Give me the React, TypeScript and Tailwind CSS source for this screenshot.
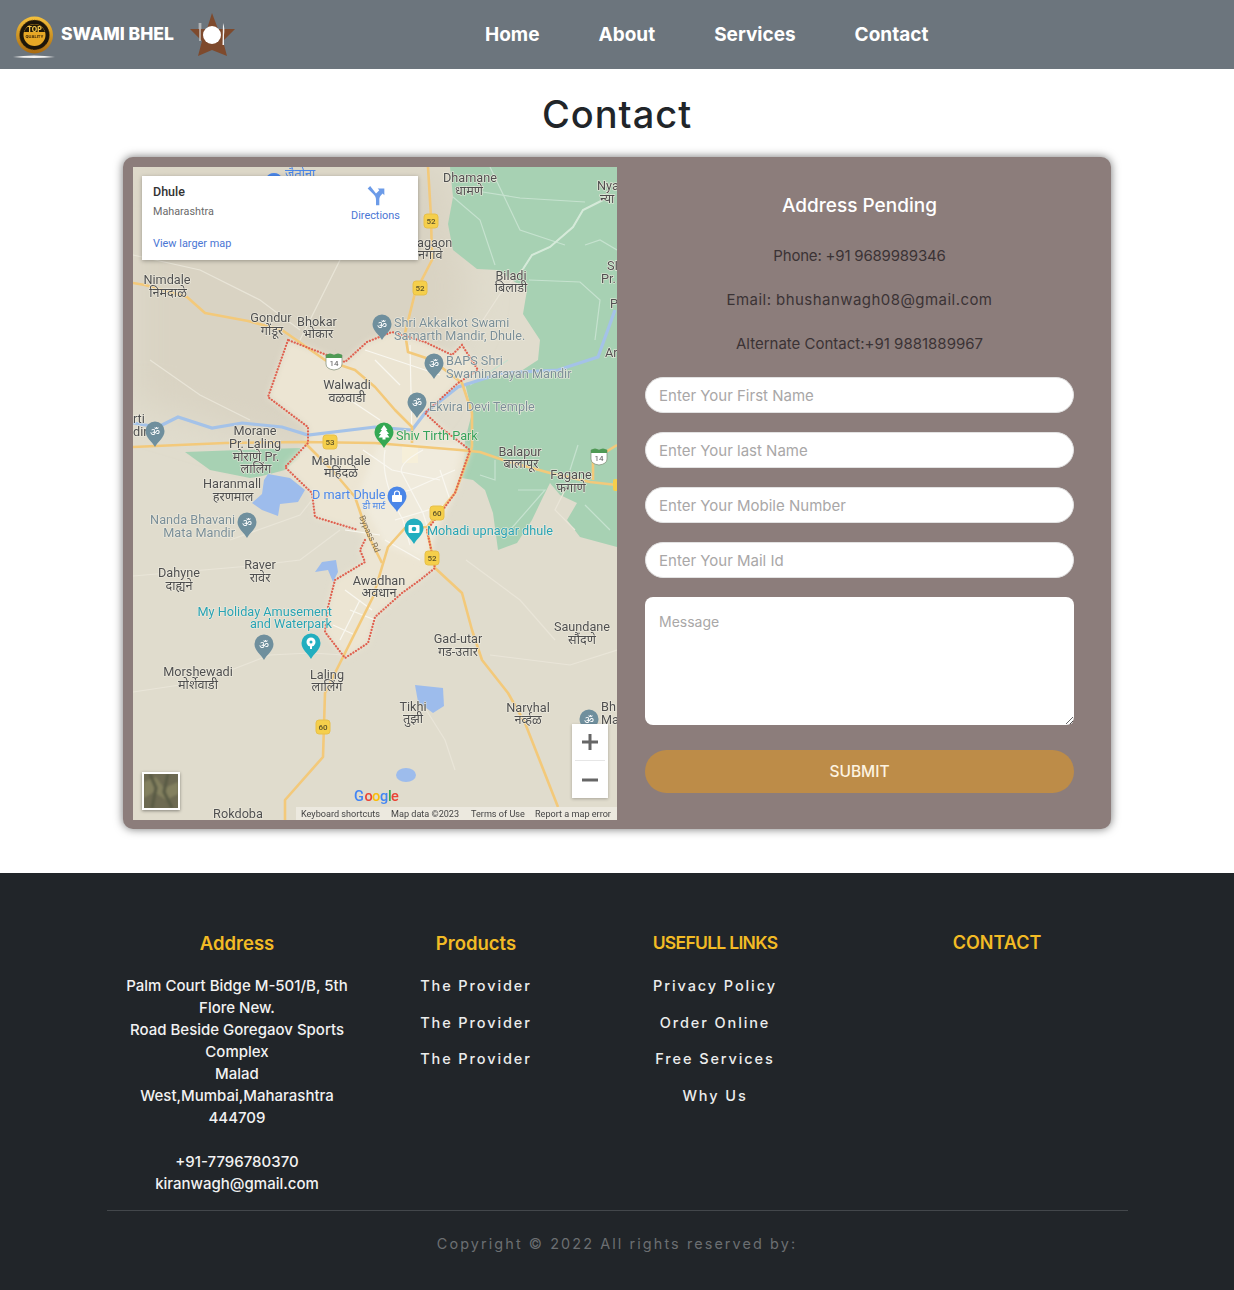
import React from "react";

const FONT = "font-['Inter','Liberation_Sans',sans-serif]";

type Label = [number, number, string];

// dark place names, centred; x and y are page pixels because the svg viewBox starts at the map's page offset
const places: Label[] = [
  [470, 182, "Dhamane"], [469, 195, "धामणे"], [511, 280, "Biladi"], [511, 292, "बिलाडी"],
  [167, 284, "Nimdale"], [168, 297, "निमदाळे"], [271, 322, "Gondur"], [272, 335, "गोंडूर"],
  [317, 326, "Bhokar"], [318, 338, "भोकार"], [347, 389, "Walwadi"], [347, 402, "वळवाडी"],
  [255, 435, "Morane"], [255, 448, "Pr. Laling"], [256, 461, "मोराणे Pr."], [256, 473, "लालिंग"],
  [520, 456, "Balapur"], [521, 468, "बालापूर"], [571, 479, "Fagane"], [571, 492, "फगाणे"],
  [341, 465, "Mahindale"], [341, 477, "महिंदळे"], [232, 488, "Haranmall"], [233, 501, "हरणमाल"],
  [179, 577, "Dahyne"], [179, 590, "दाह्यने"], [260, 569, "Raver"], [260, 582, "रावेर"],
  [379, 585, "Awadhan"], [379, 597, "अवधान"], [198, 676, "Morshewadi"], [198, 689, "मोर्शेवाडी"],
  [327, 679, "Laling"], [327, 691, "लालिंग"], [458, 643, "Gad-utar"], [458, 656, "गड-उतार"],
  [582, 631, "Saundane"], [582, 644, "सौंदणे"], [413, 711, "Tikhi"], [413, 723, "तुझी"],
  [528, 712, "Narvhal"], [528, 724, "नर्व्हळ"], [238, 818, "Rokdoba"],
];

// labels cut by the map's edge, left aligned
const leftPlaces: Label[] = [
  [417, 247, "agaon"], [418, 259, "नगावे"], [597, 190, "Nya"], [600, 203, "न्या"],
  [607, 270, "SI"], [601, 283, "Pr."], [610, 308, "P"], [605, 357, "Ar"],
  [133, 423, "rti"], [133, 436, "dir"], [601, 711, "Bh"], [601, 724, "Ma"],
];

const yellowRoads = [
  "M428 167L431 217L432 260L415 293L405 333L408 352L432 360L462 383L472 413L472 447",
  "M133 283L145 285L187 297L205 313L248 321L282 330L325 360L355 370L375 387L395 410L412 427L412 443",
  "M133 447L225 443L302 442L375 443L460 450L480 452L503 460L550 473L590 482L617 485",
  "M593 480L593 460L617 445",
  "M305 443L332 470L355 497L368 535L382 563",
  "M472 447L455 493L427 527L405 528L388 547L373 597L345 653L325 693L323 757L285 800L285 820",
  "M427 530L435 568L462 593L472 630L482 660L508 693L525 723L558 807",
];

const paleRoads = [
  "M133 576L180 572L250 566L300 560L340 530",
  "M133 692L200 682L270 655L310 653L345 655",
  "M133 255L200 270L260 300L300 330",
  "M230 540L300 515L320 490",
  "M490 655L570 665L617 650",
  "M420 700L445 740L455 770",
  "M340 260L320 300L300 340",
  "M150 360L200 395L250 420",
  "M466 560L520 600L555 640",
  "M523 269L500 294L483 320",
  "M565 490L555 510L575 530",
];

// thin tracks that run through the forest
const forestRoads = [
  "M603 200L583 210L573 227L550 247L532 255L523 269",
  "M490 167L520 230L565 245",
  "M453 197L480 220L495 265",
  "M470 190L520 198L585 202",
  "M529 280L580 282L600 300L595 340",
  "M617 250L600 240L585 245",
  "M508 360L470 385",
  "M518 490L545 490L510 530",
  "M585 505L610 530",
  "M480 475L495 480L495 460",
  "M578 445L570 470",
];

const cityStreets = [
  "M385 450Q380 480 403 520L410 545", "M423 450Q395 465 403 475L423 513L430 535",
  "M363 450L392 470L440 480", "M375 500L410 490L455 470", "M395 520L445 505",
  "M410 345L412 440", "M365 350L440 375", "M385 540L420 560", "M440 470L450 500",
  "M350 610L375 620", "M340 640L360 600", "M345 590L372 610", "M333 625L355 635",
  "M350 400L380 420", "M375 360L400 385", "M345 530L380 535",
];

const Shield = ({ x, y, n }: { x: number; y: number; n: string }) => (
  <g>
    <rect x={x - 7} y={y - 7} width="14" height="14" rx="3" fill="#f5cf4b" stroke="#e8c04a" />
    <text x={x} y={y + 3} textAnchor="middle" fontSize="8" fontWeight="500" fill="#5d5328">{n}</text>
  </g>
);

const WhiteShield = ({ x, y }: { x: number; y: number }) => (
  <g>
    <path d={`M${x - 8} ${y - 6}h16v9q0 5-8 6q-8-1-8-6z`} fill="#fff" stroke="#7d8a72" strokeWidth="0.7" />
    <path d={`M${x - 8} ${y - 6}q4-3 8 0q4-3 8 0v3h-16z`} fill="#4f9a55" />
    <text x={x} y={y + 5} textAnchor="middle" fontSize="8" fill="#555">14</text>
  </g>
);

const PinShape = ({ x, y, color, children }: { x: number; y: number; color: string; children?: React.ReactNode }) => (
  <g>
    <path d={`M${x} ${y + 15}C${x - 3} ${y + 9} ${x - 9.5} ${y + 6} ${x - 9.5} ${y - 1}a9.5 9.5 0 0 1 19 0C${x + 9.5} ${y + 6} ${x + 3} ${y + 9} ${x} ${y + 15}z`} fill={color} />
    {children}
  </g>
);

const OmPin = ({ x, y }: { x: number; y: number }) => (
  <PinShape x={x} y={y} color="#6f8f9d">
    <text x={x} y={y + 3.5} textAnchor="middle" fontSize="11" fill="#fff">ॐ</text>
  </PinShape>
);

const MapArt = () => (
  <svg viewBox="133 167 484 653" className="block w-full h-full font-['Roboto','Noto_Sans',sans-serif] blur-[0.35px]">
    <defs>
      <filter id="soft" x="-20%" y="-20%" width="140%" height="140%"><feGaussianBlur stdDeviation="3" /></filter>
      <filter id="softer" x="-20%" y="-20%" width="140%" height="140%"><feGaussianBlur stdDeviation="18" /></filter>
    </defs>
    <rect x="133" y="167" width="484" height="653" fill="#e0dccd" />
    <path d="M133 167H448L470 300L420 400L300 450L133 400Z" fill="#d9d3c3" filter="url(#softer)" />
    {/* forest */}
    <path d="M450 167L453 197L448 224L453 250L477 269L497 270L527 290L523 314L540 340L538 360L518 373L465 383L472 413L465 440L462 478L473 480L485 490L493 513L498 550L517 543L532 520L543 497L550 483L560 495L577 503L567 520L580 537L617 547V167Z" fill="#a7d1b3" />
    <path d="M185 452L240 450L300 448L300 458L285 470L262 476L250 478L210 470Z" fill="#a7d1b3" />
    {/* town limits fill */}
    <path d="M288 340L268 397L308 427L308 443L285 467L312 493L315 517L358 530L365 540L360 550L365 562L335 580L328 607L325 632L345 658L368 643L375 617L402 593L420 580L435 568L427 530L445 507L455 493L470 450L440 427L425 413L458 383L478 370L462 345L452 355L425 342L392 332L367 342L345 362Z" fill="#ece5d3" filter="url(#soft)" />
    <path d="M378 445H462L450 500L425 560L385 545L358 495Z" fill="#f0ebdd" filter="url(#soft)" />
    <rect x="402" y="445" width="16" height="18" fill="#f6efd9" />
    {paleRoads.map((d) => <path key={d} d={d} fill="none" stroke="#e9e5d8" strokeWidth="1.2" />)}
    {forestRoads.map((d) => <path key={d} d={d} fill="none" stroke="#c6e2cf" strokeWidth="1.2" />)}
    <path d={forestRoads[0]} fill="none" stroke="#d5ead9" strokeWidth="2" />
    {cityStreets.map((d) => <path key={d} d={d} fill="none" stroke="#f9f7f0" strokeWidth="1.2" />)}
    {/* river and lakes */}
    <path d="M133 423L158 427L178 417L212 428L242 423L282 427L308 435L375 427L412 430L425 413L458 387L502 373L558 370L598 357L615 310" fill="none" stroke="#a4c2e8" strokeWidth="3.2" />
    <path d="M268 474L290 478L305 490L298 502L280 504L278 516L262 510L252 503L262 494L264 480Z" fill="#9dbcec" />
    <path d="M315 572L322 562L336 560L338 572L333 582L328 570Z" fill="#9dbcec" />
    <path d="M415 685L443 688L444 706L433 713L418 702Z" fill="#9dbcec" />
    <ellipse cx="406" cy="775" rx="10" ry="7" fill="#9dbcec" />
    {yellowRoads.map((d) => <path key={d} d={d} fill="none" stroke="#f3c97a" strokeWidth="2.6" strokeLinejoin="round" />)}
    <rect x="613" y="479" width="6" height="12" rx="2" fill="#f5cf4b" />
    <path d="M288 340L268 397L308 427L308 443L285 467L312 493L315 517L358 530M365 540L360 550L365 562L335 580L328 607L325 632L345 658L368 643L375 617L402 593L420 580L435 568L427 530L445 507L455 493L470 450L440 427L425 413L458 383L478 370L462 345L452 355L425 342L392 332L367 342L345 362L288 340" fill="none" stroke="#e0604f" strokeWidth="2.2" strokeLinecap="round" strokeDasharray="0.1 3" />

    {places.map(([x, y, t]) => (
      <text key={t + y} x={x} y={y} textAnchor="middle" fontSize="12.7" fill="#4f4f4f" stroke="#efece0" strokeWidth="1.2" paintOrder="stroke">{t}</text>
    ))}
    {leftPlaces.map(([x, y, t]) => (
      <text key={t + y} x={x} y={y} fontSize="12.7" fill="#4f4f4f" stroke="#efece0" strokeWidth="1.2" paintOrder="stroke">{t}</text>
    ))}
    <g fontSize="12.7" fill="#7b8f98" stroke="#efece0" strokeWidth="1.2" paintOrder="stroke">
      <text x="394" y="327">Shri Akkalkot Swami</text>
      <text x="394" y="340">Samarth Mandir, Dhule.</text>
      <text x="446" y="365">BAPS Shri</text>
      <text x="446" y="378">Swaminarayan Mandir</text>
      <text x="429" y="411">Ekvira Devi Temple</text>
      <text x="235" y="524" textAnchor="end">Nanda Bhavani</text>
      <text x="235" y="537" textAnchor="end">Mata Mandir</text>
    </g>
    <g fontSize="12.7" stroke="#efece0" strokeWidth="1.2" paintOrder="stroke">
      <text x="396" y="440" fill="#35a35a">Shiv Tirth Park</text>
      <text x="312" y="499" fill="#4a86e8">D mart Dhule</text>
      <text x="374" y="509" textAnchor="middle" fontSize="9.5" fill="#4a86e8">डी मार्ट</text>
      <text x="427" y="535" fill="#29a3b3">Mohadi upnagar dhule</text>
      <text x="332" y="616" textAnchor="end" fill="#29a3b3">My Holiday Amusement</text>
      <text x="332" y="628" textAnchor="end" fill="#29a3b3">and Waterpark</text>
    </g>
    <text x="0" y="0" fontSize="8.5" fill="#7d6f58" transform="translate(359 517) rotate(66)">Bypass Rd</text>

    <Shield x={431} y={221} n="52" />
    <Shield x={420} y={288} n="52" />
    <Shield x={330} y={442} n="53" />
    <Shield x={437} y={513} n="60" />
    <Shield x={432} y={558} n="52" />
    <Shield x={323} y={727} n="60" />
    <WhiteShield x={334} y={361} />
    <WhiteShield x={599} y={456} />

    <OmPin x={382} y={325} />
    <OmPin x={434} y={364} />
    <OmPin x={417} y={403} />
    <OmPin x={155} y={432} />
    <OmPin x={247} y={523} />
    <OmPin x={264} y={645} />
    <OmPin x={589} y={720} />
    <PinShape x={384} y={433} color="#34a853">
      <path d="M384 425l3.5 5h-1.5l3 4h-2l2.5 3.5h-4v2h-3v-2h-4l2.5-3.500h-2l3-4h-1.500z" fill="#fff" />
    </PinShape>
    <PinShape x={397} y={497} color="#4a86e8">
      <rect x="392" y="495" width="10" height="7" rx="1" fill="#fff" />
      <path d="M394.5 495v-1.5a2.5 2.5 0 0 1 5 0V495" fill="none" stroke="#fff" strokeWidth="1.2" />
    </PinShape>
    <PinShape x={414} y={529} color="#22aebf">
      <rect x="408.5" y="525" width="11" height="8" rx="1" fill="#fff" />
      <circle cx="414" cy="529" r="2.3" fill="#22aebf" />
    </PinShape>
    <PinShape x={311} y={644} color="#22aebf">
      <circle cx="311" cy="642" r="4.5" fill="#fff" />
      <path d="M310 645h2v4h-2z" fill="#fff" />
      <circle cx="311" cy="642" r="1.5" fill="#22aebf" />
    </PinShape>
    <path d="M266 178a9 9 0 0 1 16 0z" fill="#4a86e8" />
    <text x="285" y="178" fontSize="12.7" fill="#4a86e8">जैतोना</text>

    <g fontSize="14.5" fontWeight="500">
      <text x="354" y="801" fill="#4285f4">G</text>
      <text x="364.5" y="801" fill="#ea4335">o</text>
      <text x="372" y="801" fill="#fbbc05">o</text>
      <text x="380" y="801" fill="#4285f4">g</text>
      <text x="388" y="801" fill="#34a853">l</text>
      <text x="391" y="801" fill="#ea4335">e</text>
    </g>
    <rect x="296" y="807" width="321" height="13" fill="#efece4" opacity="0.8" />
    <g fontSize="9.1" fill="#444">
      <text x="301" y="817">Keyboard shortcuts</text>
      <text x="391" y="817">Map data ©2023</text>
      <text x="471" y="817">Terms of Use</text>
      <text x="535" y="817">Report a map error</text>
    </g>
  </svg>
);

const MapPanel = () => (
  <div className="relative w-[484px] h-[653px] overflow-hidden">
    <MapArt />
    <div className="absolute left-[9px] top-[9px] w-[276px] h-[84px] bg-white shadow-[0_1px_4px_rgba(0,0,0,0.3)] font-['Roboto',sans-serif]">
      <div className="absolute left-[11px] top-[8px] text-[12.5px] leading-[16px] font-medium text-[#333]">Dhule</div>
      <div className="absolute left-[11px] top-[29px] text-[10.8px] leading-[14px] text-[#6a6a6a]">Maharashtra</div>
      <div className="absolute left-[11px] top-[61px] text-[10.9px] leading-[14px] text-[#4a76d4]">View larger map</div>
      <svg viewBox="0 0 24 24" className="absolute left-[224px] top-[10px] w-[20px] h-[20px]">
        <path d="M2 3l7 7c2 2 3 4 3 7v6h4v-7c0-2 1-4 2-5l2-2 2 2V3h-8l2 2-3 3-1 1L5 0z" fill="#6c9be8" />
      </svg>
      <div className="absolute left-[209px] top-[33px] text-[10.9px] leading-[14px] text-[#4a76d4]">Directions</div>
    </div>
    <div className="absolute left-[439px] top-[557px] w-[36px] h-[74px] bg-white shadow-[0_1px_3px_rgba(0,0,0,0.25)] flex flex-col items-center">
      <div className="h-[37px] flex items-center justify-center border-b border-[#e6e6e6] w-[30px]">
        <svg viewBox="0 0 18 18" className="w-[18px] h-[18px]"><path d="M7.5 1h3v6.5H17v3h-6.5V17h-3v-6.5H1v-3h6.5z" fill="#666" /></svg>
      </div>
      <div className="h-[37px] flex items-center justify-center">
        <svg viewBox="0 0 18 18" className="w-[18px] h-[18px]"><path d="M1 7.5h16v3H1z" fill="#666" /></svg>
      </div>
    </div>
    <div className="absolute left-[9px] top-[605px] w-[38px] h-[38px] border-2 border-white shadow-[0_1px_3px_rgba(0,0,0,0.4)] bg-[#6d6a52] overflow-hidden">
      <svg viewBox="0 0 34 34" className="w-full h-full blur-[1px]">
        <path d="M0 8L12 3L20 14L34 8V20L22 26L10 18L0 24Z" fill="#83805f" />
        <path d="M6 0L12 14L8 34M24 0L20 18L28 34" fill="none" stroke="#585a44" strokeWidth="3" />
      </svg>
    </div>
  </div>
);

const Field = ({ placeholder }: { placeholder: string }) => (
  <input
    placeholder={placeholder}
    className="w-full h-[36px] shrink-0 rounded-[18px] bg-white px-[13px] text-[15px] outline-none border border-[#e2e2e2] placeholder:text-[#a9a7a7]"
  />
);

const ContactForm = () => (
  <div className={`w-[484px] pl-[28px] pr-[27px] pt-[25px] flex flex-col items-center ${FONT}`}>
    <h4 className="text-[19px] leading-[28px] font-medium text-white">Address Pending</h4>
    <p className="mt-[24px] text-[15px] leading-[24px] tracking-[-0.2px] text-[#3b3335]">Phone: +91 9689989346</p>
    <p className="mt-[20px] text-[15px] leading-[24px] tracking-[0.45px] text-[#3b3335]">Email: bhushanwagh08@gmail.com</p>
    <p className="mt-[20px] text-[15px] leading-[24px] text-[#3b3335]">Alternate Contact:+91 9881889967</p>
    <form className="mt-[21px] w-full flex flex-col gap-[19px]">
      <Field placeholder="Enter Your First Name" />
      <Field placeholder="Enter Your last Name" />
      <Field placeholder="Enter Your Mobile Number" />
      <Field placeholder="Enter Your Mail Id" />
      <textarea
        placeholder="Message"
        className="w-full h-[128px] rounded-[8px] bg-white px-[14px] py-[15px] text-[14px] leading-[20px] outline-none placeholder:text-[#a9a7a7]"
      />
      <button type="button" className="mt-[6px] w-full h-[43px] rounded-[22px] bg-[#bd8c48] text-[15.5px] font-medium text-[#fdf3e0]">SUBMIT</button>
    </form>
  </div>
);

const Badge = () => (
  <svg viewBox="0 0 44 46" className="w-[44px] h-[46px] shrink-0 mt-[1px] blur-[0.3px]">
    <defs>
      <linearGradient id="gold" x1="0" y1="0" x2="0" y2="1">
        <stop offset="0" stopColor="#f6c23c" />
        <stop offset="1" stopColor="#a8690f" />
      </linearGradient>
    </defs>
    <circle cx="21.5" cy="23" r="18.5" fill="url(#gold)" />
    <circle cx="21.5" cy="23" r="15" fill="#1d160a" />
    <circle cx="21.5" cy="23" r="15" fill="none" stroke="#8a5b14" strokeWidth="0.8" strokeDasharray="1 1.5" />
    <circle cx="21.5" cy="23" r="11" fill="#e7a826" />
    <path d="M11 20a11 11 0 0 1 21 0z" fill="#1f1708" />
    <text x="21.5" y="20" textAnchor="middle" fontSize="7" fontWeight="800" fill="#f4c64a" fontFamily="Inter">TOP</text>
    <text x="21.5" y="26" textAnchor="middle" fontSize="4" fontWeight="700" fill="#3a2506" fontFamily="Inter">QUALITY</text>
    <path d="M0 45q21-3 42 0q-21 2-42 0z" fill="#f2f2f2" />
  </svg>
);

const StarLogo = () => (
  <svg viewBox="188 12 48 48" className="w-[48px] h-[48px] shrink-0 mt-[3px] blur-[0.3px]">
    <path d="M212 13L218 29L235 29L223 41L227 56L212 50L198 56L202 41L190 29L207 29Z" fill="#7e4a2d" />
    <circle cx="212" cy="35" r="9" fill="#fff" />
    <path d="M200 23v18" stroke="#d5d5d5" strokeWidth="1.3" />
    <path d="M199 23v6h2v-6" fill="none" stroke="#b9b9b9" strokeWidth="0.7" />
    <path d="M223 23q2 5 1 12v10h-1.5z" fill="#f2f2f2" />
  </svg>
);

const NavBar = () => (
  <header className={`h-[69px] bg-[#6c757d] flex items-center pl-[13px] ${FONT}`}>
    <Badge />
    <span className="ml-[4px] w-[114px] -mt-[1px] text-[17.5px] font-extrabold text-white whitespace-nowrap">SWAMI BHEL</span>
    <div className="ml-[13px]"><StarLogo /></div>
    <nav className="ml-[249px] flex gap-[59px] pt-[1px] text-[19px] font-bold text-white">
      <a>Home</a>
      <a>About</a>
      <a>Services</a>
      <a>Contact</a>
    </nav>
  </header>
);

const FootLink = ({ children }: { children: React.ReactNode }) => (
  <li className="text-[14.5px] leading-[21px] font-medium tracking-[1.9px] text-[#eceded]">{children}</li>
);

const Footer = () => (
  <footer className={`bg-[#212529] h-[417px] pt-[58px] ${FONT}`}>
    <div className="ml-[107px] w-[1042px] grid grid-cols-[260px_218px_260px_304px] text-center h-[279px]">
      <div>
        <h5 className="text-[18.5px] leading-[24px] font-semibold text-[#f2bb25]">Address</h5>
        <p className="mt-[20px] text-[15px] leading-[22px] font-medium text-[#f2f2f2]">
          Palm Court Bidge M-501/B, 5th<br />Flore New.<br />Road Beside Goregaov Sports<br />Complex<br />Malad<br />West,Mumbai,Maharashtra<br />444709<br /><br />+91-7796780370<br />kiranwagh@gmail.com
        </p>
      </div>
      <div>
        <h5 className="text-[18.5px] leading-[24px] font-semibold text-[#f2bb25]">Products</h5>
        <ul className="mt-[20px] flex flex-col gap-[15.6px]">
          <FootLink>The Provider</FootLink>
          <FootLink>The Provider</FootLink>
          <FootLink>The Provider</FootLink>
        </ul>
      </div>
      <div>
        <h5 className="text-[17.5px] leading-[24px] font-semibold tracking-[-0.7px] text-[#f2bb25]">USEFULL LINKS</h5>
        <ul className="mt-[20px] flex flex-col gap-[15.6px]">
          <FootLink>Privacy Policy</FootLink>
          <FootLink>Order Online</FootLink>
          <FootLink>Free Services</FootLink>
          <FootLink>Why Us</FootLink>
        </ul>
      </div>
      <div>
        <h5 className="text-[18px] leading-[24px] font-semibold text-[#f2bb25]">CONTACT</h5>
      </div>
    </div>
    <div className="ml-[107px] w-[1021px] border-t border-[#43474b]" />
    <p className="mt-[22px] text-center text-[14.4px] leading-[21px] tracking-[2.1px] text-[#6c6f72]">Copyright © 2022 All rights reserved by:</p>
  </footer>
);

export default function App() {
  return (
    <div className="w-[1234px] h-[1290px] bg-white overflow-hidden">
      <NavBar />
      <main className="h-[804px] pt-[22px]">
        <h1 className={`text-center text-[38px] leading-[46px] font-medium tracking-[1px] text-[#212529] ${FONT}`}>Contact</h1>
        <section className="ml-[123px] mt-[20px] w-[988px] h-[672px] rounded-[10px] bg-[#8c7d7b] pt-[10px] pl-[10px] flex shadow-[0_0_10px_rgba(0,0,0,0.55)]">
          <MapPanel />
          <ContactForm />
        </section>
      </main>
      <Footer />
    </div>
  );
}
